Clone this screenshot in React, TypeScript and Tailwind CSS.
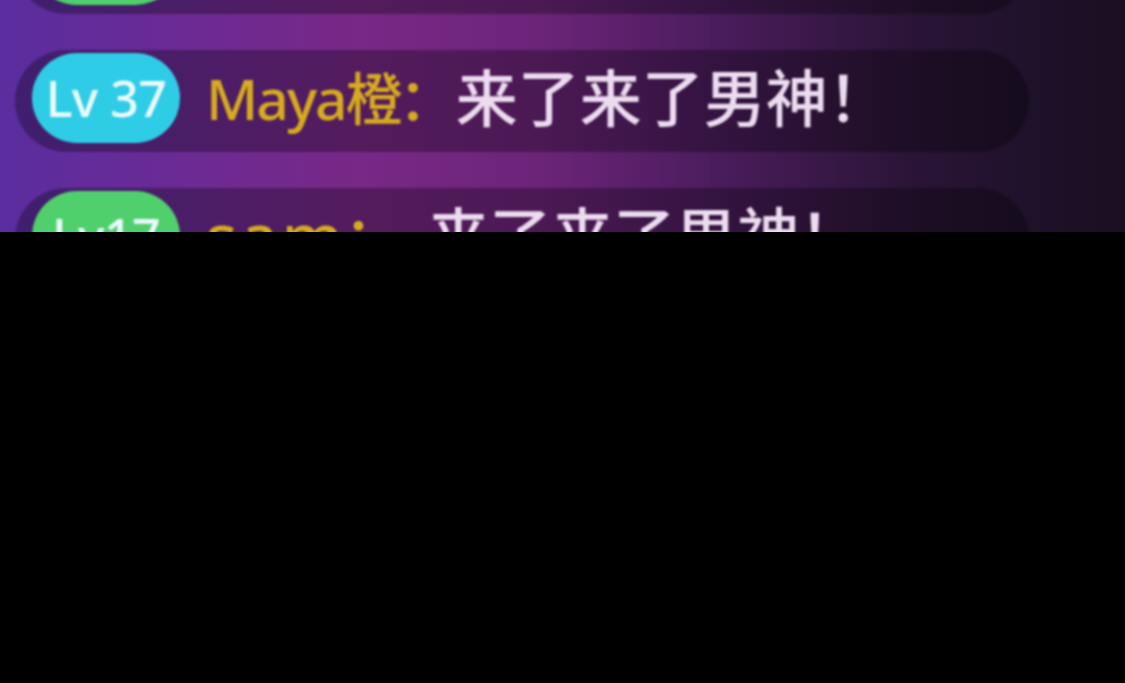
import React from "react";

interface ChatRowProps {
  level: string;
  badgeClass: string;
  name: string;
  nameClass?: string;
  msgClass?: string;
  message: string;
}

const ChatRow: React.FC<ChatRowProps> = ({
  level,
  badgeClass,
  name,
  nameClass = "text-[57px] tracking-[-0.035em]",
  msgClass = "",
  message,
}) => {
  return (
    <div className="flex items-center h-[102px] w-[1014px] ml-[15px] pl-[17px] pb-[6px] rounded-full bg-black/30 shrink-0">
      <div
        className={`flex items-center justify-center w-[148px] h-[90px] rounded-full shrink-0 ${badgeClass}`}
      >
        <span className="text-[50px] leading-none font-medium text-[#ecfbff] tracking-[-0.01em]">
          {level}
        </span>
      </div>
      <div className="flex items-center ml-[26px] whitespace-nowrap">
        <span className={`leading-none font-medium text-[#d6ab1f] ${nameClass}`}>{name}</span>
        <span className="text-[57px] leading-none font-medium text-[#d6ab1f] -ml-[2px]">：</span>
        <span className={`text-[62px] leading-none font-medium text-[#ecdcf0] ${msgClass}`}>
          {message}
        </span>
      </div>
    </div>
  );
};

export default function App() {
  const rows: ChatRowProps[] = [
    {
      level: "Lv17",
      badgeClass: "bg-[#4fd06c]",
      name: "sam",
      nameClass: "text-[64px] tracking-[4px]",
      msgClass: "ml-[26px]",
      message: "来了来了男神！",
    },
    { level: "Lv 37", badgeClass: "bg-[#2fcce7]", name: "Maya橙", message: "来了来了男神！" },
    {
      level: "Lv17",
      badgeClass: "bg-[#4fd06c]",
      name: "sam",
      nameClass: "text-[64px] tracking-[4px]",
      msgClass: "ml-[26px]",
      message: "来了来了男神！",
    },
  ];

  return (
    <div
      className="w-[1125px] h-[683px] bg-black overflow-hidden"
      style={{ fontFamily: '"Noto Sans", "Noto Sans CJK SC", sans-serif' }}
    >
      <div className="h-[232px] overflow-hidden bg-[linear-gradient(90deg,#5a2d9f_0%,#6d2a93_18%,#782886_32%,#6c2479_48%,#4a1c5c_64%,#2c1538_80%,#1e112a_92%,#1a0f22_100%)]">
        <div className="flex flex-col gap-[36px] -mt-[88px] blur-[1px]">
          {rows.map((r, i) => (
            <ChatRow key={i} {...r} />
          ))}
        </div>
      </div>
    </div>
  );
}
